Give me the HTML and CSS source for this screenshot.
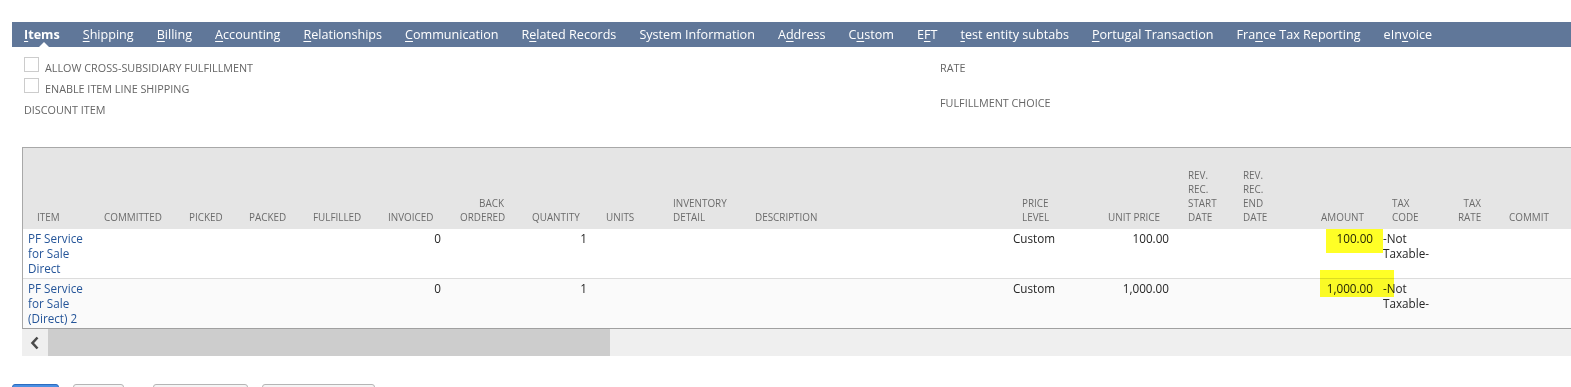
FILE: index.html
```html
<!DOCTYPE html>
<html lang="en">
<head>
  <meta charset="UTF-8" />
  <title>Items</title>
  <link rel="stylesheet" href="styles.css">
</head>
<body>

  <div class="tabs">
    <span class="tab active"><u>I</u>tems</span>
    <span class="tab"><u>S</u>hipping</span>
    <span class="tab"><u>B</u>illing</span>
    <span class="tab"><u>A</u>ccounting</span>
    <span class="tab"><u>R</u>elationships</span>
    <span class="tab"><u>C</u>ommunication</span>
    <span class="tab">R<u>e</u>lated Records</span>
    <span class="tab">System Information</span>
    <span class="tab">A<u>d</u>dress</span>
    <span class="tab">C<u>u</u>stom</span>
    <span class="tab">E<u>F</u>T</span>
    <span class="tab"><u>t</u>est entity subtabs</span>
    <span class="tab"><u>P</u>ortugal Transaction</span>
    <span class="tab">Fra<u>n</u>ce Tax Reporting</span>
    <span class="tab">eIn<u>v</u>oice</span>
  </div>

  <div class="fields">
    <div class="col">
      <label class="check"><span class="box"></span>ALLOW CROSS-SUBSIDIARY FULFILLMENT</label>
      <label class="check"><span class="box"></span>ENABLE ITEM LINE SHIPPING</label>
      <div class="field">DISCOUNT ITEM</div>
    </div>
    <div class="col right">
      <div class="field">RATE</div>
      <div class="field">FULFILLMENT CHOICE</div>
    </div>
  </div>

  <div class="sublist">
    <div class="sublist-body">
      <table>
        <colgroup>
          <col style="width:67px"><col style="width:85px"><col style="width:60px"><col style="width:64px">
          <col style="width:75px"><col style="width:72px"><col style="width:72px"><col style="width:74px">
          <col style="width:67px"><col style="width:82px"><col style="width:267px"><col style="width:55px">
          <col style="width:111px"><col style="width:55px"><col style="width:51px"><col style="width:98px">
          <col style="width:66px"><col style="width:51px"><col style="width:66px"><col style="width:200px">
        </colgroup>
        <thead>
          <tr>
            <th>ITEM</th>
            <th>COMMITTED</th>
            <th>PICKED</th>
            <th>PACKED</th>
            <th>FULFILLED</th>
            <th class="num">INVOICED</th>
            <th class="num">BACK<br>ORDERED</th>
            <th class="num">QUANTITY</th>
            <th>UNITS</th>
            <th>INVENTORY<br>DETAIL</th>
            <th>DESCRIPTION</th>
            <th>PRICE<br>LEVEL</th>
            <th class="num">UNIT PRICE</th>
            <th>REV.<br>REC.<br>START<br>DATE</th>
            <th>REV.<br>REC.<br>END<br>DATE</th>
            <th class="num">AMOUNT</th>
            <th>TAX<br>CODE</th>
            <th class="num">TAX<br>RATE</th>
            <th>COMMIT</th>
            <th></th>
          </tr>
        </thead>
        <tbody>
          <tr>
            <td><a href="#">PF Service for Sale Direct</a></td>
            <td></td><td></td><td></td><td></td>
            <td class="num">0</td>
            <td></td>
            <td class="num">1</td>
            <td></td><td></td><td></td>
            <td>Custom</td>
            <td class="num">100.00</td>
            <td></td><td></td>
            <td class="num">100.00</td>
            <td>-Not Taxable-</td>
            <td></td><td></td><td></td>
          </tr>
          <tr class="alt">
            <td><a href="#">PF Service for Sale (Direct) 2</a></td>
            <td></td><td></td><td></td><td></td>
            <td class="num">0</td>
            <td></td>
            <td class="num">1</td>
            <td></td><td></td><td></td>
            <td>Custom</td>
            <td class="num">1,000.00</td>
            <td></td><td></td>
            <td class="num">1,000.00</td>
            <td>-Not Taxable-</td>
            <td></td><td></td><td></td>
          </tr>
        </tbody>
      </table>
      <!-- marker highlights drawn over the amounts -->
      <span class="marker mark-1"></span>
      <span class="marker mark-2"></span>
    </div>
    <div class="hscroll">
      <span class="arrow">
        <svg width="10" height="14" viewBox="0 0 10 14"><polyline points="7.5,1.5 2.5,7 7.5,12.5" fill="none" stroke="#4a4a4a" stroke-width="2.6"/></svg>
      </span>
      <span class="thumb"></span>
    </div>
  </div>

  <div class="buttons">
    <span class="btn primary"></span>
    <span class="btn w51"></span>
    <span class="sep"></span>
    <span class="btn w95"></span>
    <span class="btn w113"></span>
    <span class="sep"></span>
  </div>

</body>
</html>
```

FILE: styles.css
```css
* {
  box-sizing: border-box;
}
body {
  margin: 0;
  font-family: 'Open Sans', 'Liberation Sans', sans-serif;
  color: #262626;
  background: #fff;
  overflow: hidden;
}

/* subtab bar */
.tabs {
  margin: 22px 0 0 12px;
  height: 25px;
  background: #607799;
  display: flex;
  align-items: center;
  gap: 23px;
  padding-left: 12px;
}
.tab {
  position: relative;
  color: #fff;
  font-size: 12.6px;
  white-space: nowrap;
  line-height: 25px;
}
.tab u {
  text-underline-offset: 2px;
}
.tab.active {
  font-weight: bold;
}
.tab.active::after {
  content: "";
  position: absolute;
  left: 50%;
  bottom: 0;
  margin-left: -3px;
  border-left: 5px solid transparent;
  border-right: 5px solid transparent;
  border-bottom: 5px solid #fff;
}

/* header fields */
.fields {
  display: grid;
  grid-template-columns: 916px auto;
  padding-left: 24px;
  margin-top: 10px;
}
.col {
  display: flex;
  flex-direction: column;
}
.col.right {
  gap: 13px;
}
.check {
  display: flex;
  align-items: center;
  height: 21px;
  font-size: 10.8px;
  color: #666;
}
.box {
  width: 15px;
  height: 15px;
  border: 1px solid #ccc;
  margin-right: 6px;
  align-self: flex-start;
}
.field {
  height: 22px;
  line-height: 22px;
  font-size: 10.8px;
  color: #666;
}

/* sublist table */
.sublist {
  margin: 26px 0 0 22px;
}
.sublist-body {
  position: relative;
  border-top: 1px solid #a8a8a8;
  border-left: 1px solid #a8a8a8;
  border-bottom: 1px solid #a0a0a0;
  overflow: hidden;
}
table {
  border-collapse: separate;
  border-spacing: 0;
  table-layout: fixed;
  width: 1688px;
}
th {
  height: 81px;
  background: #e5e5e5;
  color: #6b6b6b;
  font-size: 9.9px;
  font-weight: normal;
  line-height: 14px;
  text-align: left;
  vertical-align: bottom;
  padding: 0 14px 5px;
  white-space: nowrap;
}
td {
  height: 50px;
  font-size: 11.7px;
  line-height: 15px;
  vertical-align: top;
  padding: 2px 5px 0;
}
tbody tr:first-child td {
  border-bottom: 1px solid #dcdcdc;
}
tr.alt td {
  background: #fafafa;
  height: 49px;
}
.num {
  text-align: right;
}
td a {
  color: #255599;
  text-decoration: none;
}

.marker {
  position: absolute;
  background: rgba(255, 255, 0, 0.85);
  mix-blend-mode: multiply;
}
.mark-1 {
  left: 1303px;
  top: 81px;
  width: 57px;
  height: 24px;
}
.mark-2 {
  left: 1297px;
  top: 122px;
  width: 74px;
  height: 27px;
}

.hscroll {
  display: flex;
  height: 27px;
  background: #efefef;
}
.arrow {
  width: 26px;
  display: flex;
  align-items: center;
  justify-content: center;
}
.thumb {
  width: 562px;
  background: #cdcdcd;
}

/* button row */
.buttons {
  display: flex;
  gap: 14px;
  margin-top: 28px;
  padding-left: 12px;
}
.btn {
  height: 28px;
  width: 51px;
  border: 1px solid #b5b5b5;
  border-radius: 3px;
  background: #f5f5f5;
}
.btn.primary {
  width: 47px;
  background: #4a8fe2;
  border-color: #2d6cc0;
}
.btn.w95 {
  width: 95px;
}
.btn.w113 {
  width: 113px;
}
.sep {
  width: 1px;
  height: 20px;
  margin-top: 4px;
  background: #c8c8c8;
}
```
